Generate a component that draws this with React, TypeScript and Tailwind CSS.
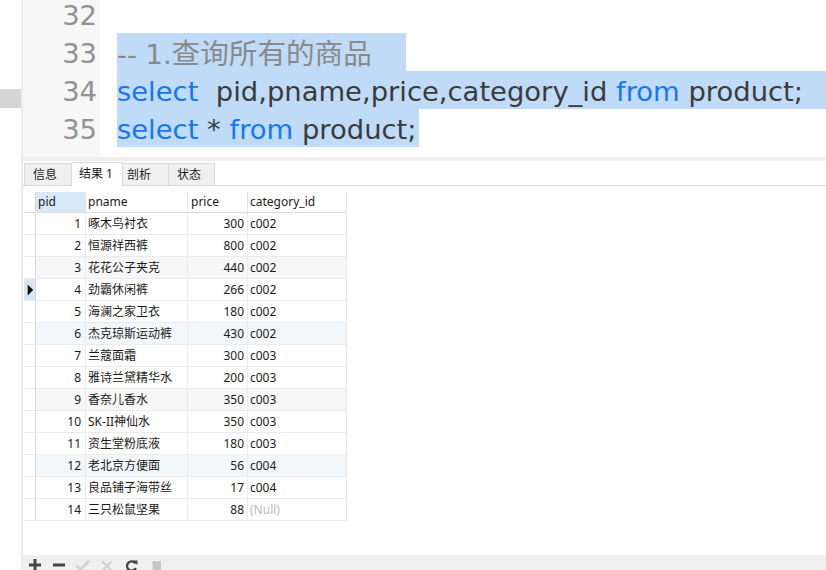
import React from 'react';

const rows: [number, string, number, string | null][] = [
  [1, '啄木鸟衬衣', 300, 'c002'],
  [2, '恒源祥西裤', 800, 'c002'],
  [3, '花花公子夹克', 440, 'c002'],
  [4, '劲霸休闲裤', 266, 'c002'],
  [5, '海澜之家卫衣', 180, 'c002'],
  [6, '杰克琼斯运动裤', 430, 'c002'],
  [7, '兰蔻面霜', 300, 'c003'],
  [8, '雅诗兰黛精华水', 200, 'c003'],
  [9, '香奈儿香水', 350, 'c003'],
  [10, 'SK-II神仙水', 350, 'c003'],
  [11, '资生堂粉底液', 180, 'c003'],
  [12, '老北京方便面', 56, 'c004'],
  [13, '良品铺子海带丝', 17, 'c004'],
  [14, '三只松鼠坚果', 88, null],
];

const rowBg: Record<number, string> = {
  3: 'bg-[#f7f7f7]',
  6: 'bg-[#f2f7fc]',
  9: 'bg-[#f7f7f7]',
  12: 'bg-[#f2f7fc]',
};

function Toolbar() {
  return (
    <div className="h-[15px] bg-[#f0f0f0] flex overflow-hidden">
      <svg width="24" height="16" viewBox="0 0 24 16" className="shrink-0">
        <rect x="6" y="8.5" width="12" height="3" fill="#454545" />
        <rect x="10.5" y="4" width="3" height="12" fill="#454545" />
      </svg>
      <svg width="24" height="16" viewBox="0 0 24 16" className="shrink-0">
        <rect x="6" y="8.5" width="12" height="3" fill="#454545" />
      </svg>
      <svg width="24" height="16" viewBox="0 0 24 16" className="shrink-0">
        <polyline points="5.5,10.5 9.5,14.5 18,6" fill="none" stroke="#d2d2d2" strokeWidth="2.6" />
      </svg>
      <svg width="24" height="16" viewBox="0 0 24 16" className="shrink-0">
        <path d="M7.5 6.5 L16.5 15.5 M16.5 6.5 L7.5 15.5" stroke="#d2d2d2" strokeWidth="2.4" />
      </svg>
      <svg width="24" height="16" viewBox="0 0 24 16" className="shrink-0">
        <path d="M16.5 8.5 A4.6 4.6 0 1 0 16.8 13" fill="none" stroke="#454545" strokeWidth="2.3" />
        <polygon points="14,5.5 18.5,5.5 18.5,10" fill="#454545" />
      </svg>
      <svg width="24" height="16" viewBox="0 0 24 16" className="shrink-0">
        <rect x="9.5" y="6" width="8.5" height="10" fill="#c6c6c6" />
      </svg>
    </div>
  );
}

export default function App() {
  const codeFont = "font-['DejaVu_Sans','Noto_Sans_CJK_SC',sans-serif]";
  const line = 'h-[38px] pt-[4px] leading-[34px]';
  return (
    <div className="w-[826px] h-[570px] flex bg-white overflow-hidden">
      <div className="w-[21px] shrink-0">
        <div className="mt-[89px] h-[19px] bg-[#d6d6d6]" />
      </div>
      <div className="flex-1 min-w-0 flex flex-col border-l-2 border-[#ececec]">
        {/* Editor */}
        <div className={`h-[157px] flex overflow-hidden ${codeFont} text-[27.4px]`}>
          <div className="w-[77px] shrink-0 bg-[#f7f7f7] pr-[3px]">
            <div className="-mt-[5px] flex flex-col items-end text-[#929292]">
              <div className={line}>32</div>
              <div className={line}>33</div>
              <div className={line}>34</div>
              <div className={line}>35</div>
            </div>
          </div>
          <div className="flex-1 min-w-0 pl-[17px]">
            <div className="-mt-[5px] flex flex-col whitespace-pre">
              <div className={line}> </div>
              <div className={`${line} w-[289px] bg-[#bfdbf8] text-[#8a8a8a]`}>
                -- 1.<span className="text-[28.6px]">查询所有的商品</span>
              </div>
              <div className={`${line} bg-[#bfdbf8] text-[#3b3b3b]`}>
                <span className="text-[#1677f2]">select</span>  pid,pname,price,category_id <span className="text-[#1677f2]">from</span> product;
              </div>
              <div className={`${line} w-[302px] bg-[#bfdbf8] text-[#3b3b3b]`}>
                <span className="text-[#1677f2]">select</span> * <span className="text-[#1677f2]">from</span> product;
              </div>
            </div>
          </div>
        </div>
        <div className="h-[4px] bg-[#efefef]" />
        {/* Bottom panel */}
        <div className="flex-1 min-h-0 flex flex-col font-['Noto_Sans','Noto_Sans_CJK_SC',sans-serif] text-[12px] text-[#1a1a1a]">
          <div className="h-[25px] flex items-end border-b border-[#d9d9d9] pl-[1px]">
            <div className="h-[22px] w-[48px] bg-[#f0f0f0] border border-b-0 border-[#d9d9d9] flex items-center pl-[8px]">信息</div>
            <div className="h-[24px] w-[51px] bg-white border border-b-0 border-l-0 border-[#d9d9d9] flex items-center pl-[7px] -mb-px pb-px">结果 1</div>
            <div className="h-[22px] w-[46px] bg-[#f0f0f0] border border-b-0 border-l-0 border-[#d9d9d9] flex items-center pl-[4px]">剖析</div>
            <div className="h-[22px] w-[46px] bg-[#f0f0f0] border border-b-0 border-l-0 border-[#d9d9d9] flex items-center pl-[8px]">状态</div>
          </div>
          <div className="flex-1 min-h-0 pt-[6px] pl-[1px]">
            <div className="w-[323px] border-r border-[#e6e6e6]">
              <div className="h-[21px] flex border-b border-[#dcdcdc]">
                <div className="w-[12px] shrink-0 border-r border-[#d6d6d6]" />
                <div className="w-[50px] shrink-0 bg-[#d9e8f6] border-r border-[#e2e2e2] flex items-center pl-[2px]">pid</div>
                <div className="w-[102px] shrink-0 border-r border-[#e2e2e2] flex items-center pl-[2px]">pname</div>
                <div className="w-[60px] shrink-0 border-r border-[#e2e2e2] flex items-center pl-[3px]">price</div>
                <div className="w-[98px] shrink-0 flex items-center pl-[2px]">category_id</div>
              </div>
              {rows.map(([pid, name, price, cat]) => (
                <div key={pid} className={`h-[22px] flex border-b border-[#ebebeb] ${rowBg[pid] ?? ''}`}>
                  <div className={`w-[12px] shrink-0 border-r border-[#d6d6d6] flex items-center ${pid === 4 ? 'bg-[#d9e8f6]' : 'bg-white'}`}>
                    {pid === 4 && (
                      <svg width="12" height="22" viewBox="0 0 12 22">
                        <polygon points="4,5 10,11 4,17" fill="#111" />
                      </svg>
                    )}
                  </div>
                  <div className="w-[50px] shrink-0 border-r border-[#ebebeb] flex items-center justify-end pr-[4px]">{pid}</div>
                  <div className="w-[102px] shrink-0 border-r border-[#ebebeb] flex items-center pl-[2px] whitespace-nowrap">{name}</div>
                  <div className="w-[60px] shrink-0 border-r border-[#ebebeb] flex items-center justify-end pr-[3px]">{price}</div>
                  <div className="w-[98px] shrink-0 flex items-center pl-[2px]">
                    {cat ?? <span className="text-[#b9b9cc]">(Null)</span>}
                  </div>
                </div>
              ))}
            </div>
          </div>
          <Toolbar />
        </div>
      </div>
    </div>
  );
}
